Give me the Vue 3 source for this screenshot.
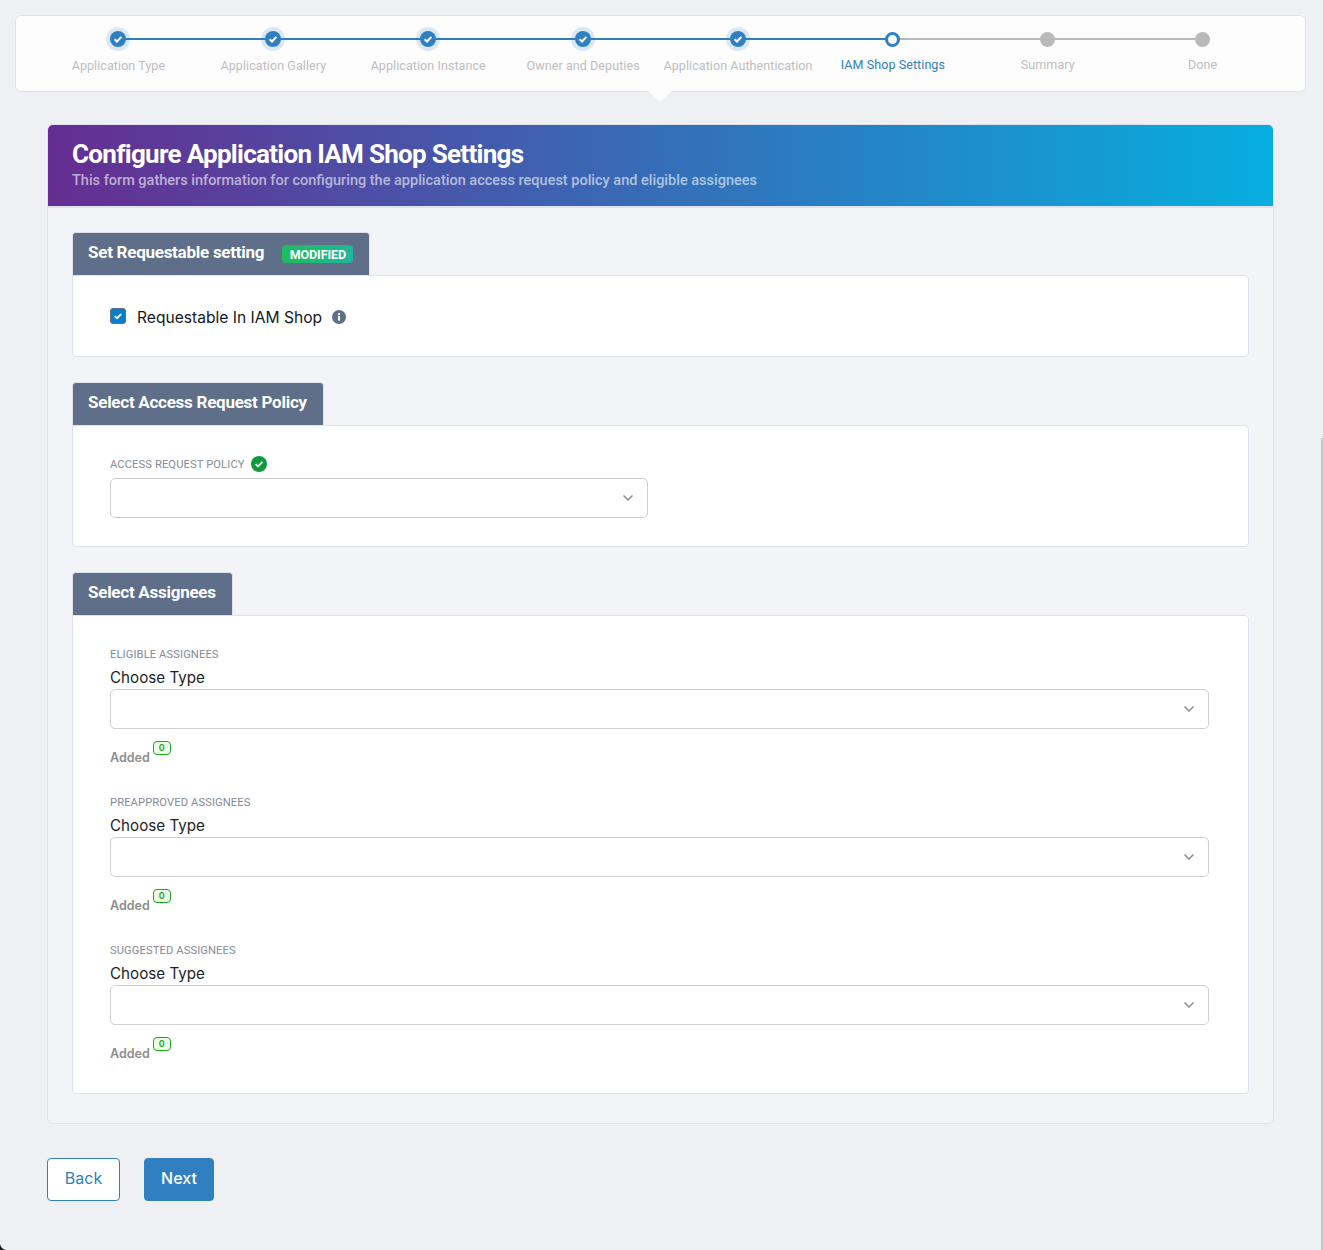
<script setup>
const steps = [
  { label: 'Application Type', state: 'done' },
  { label: 'Application Gallery', state: 'done' },
  { label: 'Application Instance', state: 'done' },
  { label: 'Owner and Deputies', state: 'done' },
  { label: 'Application Authentication', state: 'done' },
  { label: 'IAM Shop Settings', state: 'current' },
  { label: 'Summary', state: 'todo' },
  { label: 'Done', state: 'todo' }
]
const assignees = ['ELIGIBLE ASSIGNEES', 'PREAPPROVED ASSIGNEES', 'SUGGESTED ASSIGNEES']
</script>

<template>
  <div class="page">
    <div class="stepper">
      <div v-for="(s, i) in steps" :key="s.label" class="step" :class="s.state">
        <div class="track">
          <span v-if="i < steps.length - 1" class="line"></span>
          <span class="dot">
            <svg v-if="s.state === 'done'" width="10" height="10" viewBox="0 0 10 10"><path d="M1.6 5.2 4 7.500 8.400 2.900" fill="none" stroke="#fff" stroke-width="2"/></svg>
          </span>
        </div>
        <div class="step-label">{{ s.label }}</div>
      </div>
    </div>
    <div class="pointer"></div>

    <div class="card">
      <div class="hero">
        <h1>Configure Application IAM Shop Settings</h1>
        <p>This form gathers information for configuring the application access request policy and eligible assignees</p>
      </div>
      <div class="card-body">
        <section class="group">
          <div class="tab"><span class="tab-text">Set Requestable setting</span><span class="badge">MODIFIED</span></div>
          <div class="panel panel-check">
            <span class="checkbox">
              <svg width="10" height="10" viewBox="0 0 10 10"><path d="M1.800 5.200 4 7.300 8.200 3" fill="none" stroke="#fff" stroke-width="1.800"/></svg>
            </span>
            <span class="check-label">Requestable In IAM Shop</span>
            <svg class="info" width="14" height="14" viewBox="0 0 14 14"><circle cx="7" cy="7" r="7" fill="#5f6f89"/><rect x="6" y="6" width="2" height="4.600" fill="#fff"/><rect x="6" y="3.200" width="2" height="1.900" fill="#fff"/></svg>
          </div>
        </section>

        <section class="group">
          <div class="tab"><span class="tab-text">Select Access Request Policy</span></div>
          <div class="panel panel-policy">
            <div class="field-label">ACCESS REQUEST POLICY
              <svg width="16" height="16" viewBox="0 0 16 16"><circle cx="8" cy="8" r="8" fill="#0b9a3c"/><path d="M4.600 8.200 7 10.400 11.400 5.900" fill="none" stroke="#fff" stroke-width="1.700"/></svg>
            </div>
            <div class="select select-short">
              <svg class="chev" width="12" height="8" viewBox="0 0 12 8"><path d="M1.500 1.500 6 6l4.500-4.500" fill="none" stroke="#8b8b8b" stroke-width="1.500"/></svg>
            </div>
          </div>
        </section>

        <section class="group">
          <div class="tab"><span class="tab-text">Select Assignees</span></div>
          <div class="panel panel-assign">
            <div v-for="a in assignees" :key="a" class="assign">
              <div class="field-label plain">{{ a }}</div>
              <div class="choose">Choose Type</div>
              <div class="select">
                <svg class="chev" width="12" height="8" viewBox="0 0 12 8"><path d="M1.500 1.500 6 6l4.500-4.500" fill="none" stroke="#8b8b8b" stroke-width="1.500"/></svg>
              </div>
              <div class="added">Added <span class="count">0</span></div>
            </div>
          </div>
        </section>
      </div>
    </div>

    <div class="actions">
      <button class="btn back">Back</button>
      <button class="btn next">Next</button>
    </div>
    <div class="scroll"></div>
    <div class="corner"></div>
  </div>
</template>

<style scoped>
.page {
  position: relative;
  box-sizing: border-box;
  height: 1250px;
  padding: 15px 17px 0 15px;
  background: #eff0f4;
  font-family: Inter, sans-serif;
  overflow: hidden;
}
.stepper {
  box-sizing: border-box;
  height: 77px;
  display: grid;
  grid-template-columns: repeat(8, 154.900px);
  padding: 10px 0 0 25px;
  background: #fdfdfe;
  border: 1px solid #dfe1ec;
  border-radius: 6px;
}
.step { min-width: 0; text-align: center; }
.track {
  position: relative;
  height: 26px;
  display: flex;
  align-items: center;
  justify-content: center;
}
.line {
  position: absolute;
  left: 50%;
  top: 12px;
  width: 155px;
  height: 2px;
  background: #b9b9b9;
}
.done .line { background: #2f7fc1; }
.dot {
  position: relative;
  box-sizing: border-box;
  display: flex;
  align-items: center;
  justify-content: center;
  width: 15px;
  height: 15px;
  border-radius: 50%;
  background: #b9b9b9;
}
.done .dot {
  width: 16px;
  height: 16px;
  background: #2f7fc1;
  box-shadow: 0 0 0 4px rgba(47, 127, 193, .17);
}
.current .dot { background: #fff; border: 3px solid #2f7fc1; }
.step-label {
  margin-top: 5px;
  font-family: Roboto, sans-serif;
  font-size: 12.500px;
  line-height: 18px;
  color: #bdbdc1;
  white-space: nowrap;
  letter-spacing: .08px;
}
.current .step-label { color: #2f7fc1; margin-top: 4px; }
.todo .step-label { margin-top: 4px; }
.pointer {
  width: 0;
  height: 0;
  margin: -1px 0 0 633px;
  border-left: 12px solid transparent;
  border-right: 12px solid transparent;
  border-top: 11px solid #fdfdfe;
}
.card {
  box-sizing: border-box;
  width: 1227px;
  height: 1000px;
  margin: 22px 0 0 32px;
  background: #f3f4f7;
  border: 1px solid #dfe1ec;
  border-radius: 6px;
  overflow: hidden;
}
.hero {
  box-sizing: border-box;
  height: 83px;
  padding: 13px 24px 0;
  background: linear-gradient(90deg, #662d91, #06aedf 100%);
  border-bottom: 2px solid #dfe1ec;
  color: #fff;
}
.hero h1 {
  margin: 0;
  font-family: Roboto, sans-serif;
  font-size: 26px;
  line-height: 32px;
  font-weight: 700;
  letter-spacing: -.7px;
  white-space: nowrap;
}
.hero p {
  margin: 2px 0 0;
  font-family: Roboto, sans-serif;
  font-size: 14.500px;
  line-height: 18px;
  font-weight: 500;
  color: rgba(255,255,255,.6);
  white-space: nowrap;
}
.card-body { padding: 24px 24px 0; }
.group { margin-bottom: 25px; }
.tab {
  box-sizing: border-box;
  display: inline-flex;
  align-items: center;
  height: 43px;
  padding: 0 16px 0 15px;
  background: #5f6f89;
  border: 1px solid #dfe1ec;
  border-bottom: 0;
  border-radius: 4px 4px 0 0;
  color: #fff;
  font-family: Roboto, sans-serif;
  font-weight: 700;
  white-space: pre;
  vertical-align: top;
}
.tab-text {
  font-size: 17px;
  letter-spacing: -.26px;
  margin-bottom: 5px;
}
.badge {
  margin-left: 18px;
  padding: 2px 7.500px 1px;
  background: linear-gradient(90deg, #1fbb5c, #1fb89a);
  border-radius: 4px;
  font-size: 12.500px;
  line-height: 15px;
  letter-spacing: -.1px;
}
.panel {
  display: block;
  box-sizing: border-box;
  background: #fff;
  border: 1px solid #dfe1ec;
  border-radius: 0 4px 4px 4px;
  padding-left: 37px;
}
.panel-check { height: 82px; display: flex; align-items: center; }
.checkbox {
  display: flex;
  align-items: center;
  justify-content: center;
  width: 16px;
  height: 16px;
  background: #0a7fc9;
  border: 1px solid #5f6f89;
  box-sizing: border-box;
  border-radius: 3px;
}
.check-label {
  margin-left: 11px;
  font-size: 15.600px;
  line-height: 20px;
  color: #14181f;
  padding-top: 4px;
}
.info { margin: 1px 0 0 10px; }
.panel-policy { height: 122px; padding-top: 30px; }
.field-label {
  display: flex;
  align-items: center;
  gap: 6px;
  height: 16px;
  font-family: Roboto, sans-serif;
  font-size: 11.200px;
  color: #858b97;
  letter-spacing: .1px;
}
.select {
  position: relative;
  box-sizing: border-box;
  width: 1099px;
  height: 40px;
  background: #fff;
  border: 1px solid #cfcfd2;
  border-radius: 5px;
}
.select-short { width: 538px; margin-top: 6px; }
.chev { position: absolute; right: 13px; top: 15px; }
.panel-assign { height: 479px; padding-top: 30px; }
.assign { height: 148.100px; }
.choose {
  margin: 6px 0 1px;
  font-size: 15.200px;
  line-height: 20px;
  color: #1b1f27;
}
.added {
  display: flex;
  align-items: flex-start;
  gap: 3px;
  height: 32px;
  padding-top: 12px;
  font-size: 12.500px;
  font-weight: 600;
  line-height: 34px;
  color: #8c8c8c;
}
.count {
  box-sizing: border-box;
  width: 18px;
  height: 14px;
  border: 1px solid #1ea51e;
  border-radius: 4px;
  background: #eefbe9;
  color: #1ea51e;
  font-size: 9px;
  line-height: 12px;
  text-align: center;
}
.actions { display: flex; gap: 24px; margin: 34px 0 0 32px; }
.btn {
  box-sizing: border-box;
  height: 43px;
  padding: 0 0 3px;
  border: 1px solid #2f7fc1;
  border-radius: 4px;
  font-family: Inter, sans-serif;
  font-size: 16px;
}
.back { width: 73px; background: #fff; color: #2f7fc1; }
.next { width: 70px; background: #2f7fc1; color: #fff; font-weight: 500; }
.scroll {
  position: absolute;
  right: 0;
  top: 438px;
  bottom: 0;
  width: 2px;
  background: #c4c8cc;
}
.corner {
  position: absolute;
  left: 0;
  bottom: 0;
  width: 7px;
  height: 7px;
  background: radial-gradient(circle at 100% 0, transparent 6.500px, #15151a 7.500px);
}
</style>
